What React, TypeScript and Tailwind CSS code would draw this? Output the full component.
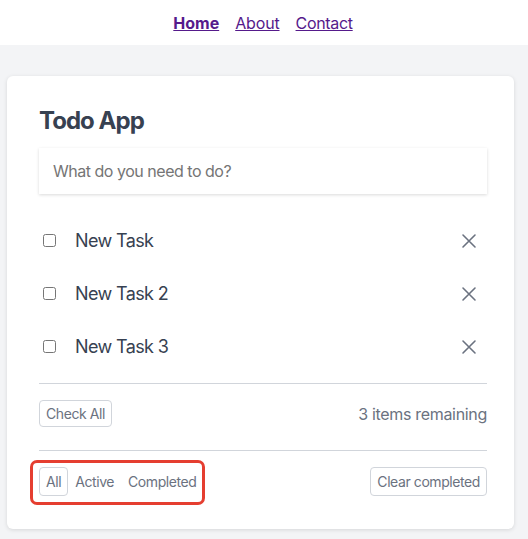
import React from "react";

const XIcon = () => (
  <svg width="16" height="16" viewBox="0 0 16 16" fill="none" stroke="#6b7280" strokeWidth="1.6" strokeLinecap="round">
    <path d="M2 2 L14 14 M14 2 L2 14" />
  </svg>
);

export default function App() {
  const tasks = ["New Task", "New Task 2", "New Task 3"];
  return (
    <div className="min-h-[539px] bg-[#f3f4f6]" style={{ fontFamily: "Inter, 'Noto Sans', sans-serif" }}>
      <nav className="h-[45px] bg-white flex items-center justify-center gap-[16px] text-[16px] text-[#551a8b] pr-[2px]">
        <a href="#" className="underline font-bold">Home</a>
        <a href="#" className="underline tracking-[-0.01em]">About</a>
        <a href="#" className="underline tracking-[-0.02em]">Contact</a>
      </nav>
      <div className="ml-[7px] mt-[31px] w-[507px] bg-white rounded-md shadow-[0_1px_4px_rgba(0,0,0,0.12)] pl-[32px] pr-[27px] pt-[29px] pb-[24px]">
        <h1 className="text-[24px] leading-[32px] font-bold text-[#374151] tracking-[-0.04em]">Todo App</h1>
        <input
          className="mt-[11px] w-full h-[46px] px-[14px] text-[16px] tracking-[-0.03em] text-[#374151] placeholder:text-[#757575] shadow-[0_1px_3px_rgba(0,0,0,0.15)] outline-none"
          placeholder="What do you need to do?"
        />
        <ul className="mt-[20px]">
          {tasks.map((t) => (
            <li key={t} className="h-[53px] flex items-center">
              <input type="checkbox" className="ml-[4px] w-[13px] h-[13px]" />
              <span className="ml-[19px] text-[18px] text-[#374151] tracking-[-0.035em]">{t}</span>
              <button className="ml-auto mr-[10px] flex items-center">
                <XIcon />
              </button>
            </li>
          ))}
        </ul>
        <div className="mt-[10px] border-t border-[#d1d5db]" />
        <div className="flex items-center justify-between mt-[16px]">
          <button className="h-[27px] px-[6px] border border-[#d1d5db] rounded text-[14px] text-[#6b7280] tracking-[-0.03em]">Check All</button>
          <span className="text-[16px] text-[#6b7280] tracking-[-0.02em]">3 items remaining</span>
        </div>
        <div className="mt-[23px] border-t border-[#d1d5db]" />
        <div className="flex items-center justify-between mt-[9px]">
          <div className="ml-[-9px] flex items-center border-[3px] border-[#e53e30] rounded-[7px] pl-[6px] pr-[5px] pt-[4px] pb-[6px] text-[14px] text-[#6b7280] tracking-[-0.03em]">
            <button className="h-[29px] px-[6px] border border-[#d1d5db] rounded">All</button>
            <button className="h-[29px] px-[7px]">Active</button>
            <button className="h-[29px] pl-[7px] pr-[1px]">Completed</button>
          </div>
          <button className="mt-[-2px] h-[29px] px-[6px] border border-[#d1d5db] rounded text-[14px] text-[#6b7280] tracking-[-0.03em]">Clear completed</button>
        </div>
      </div>
    </div>
  );
}
